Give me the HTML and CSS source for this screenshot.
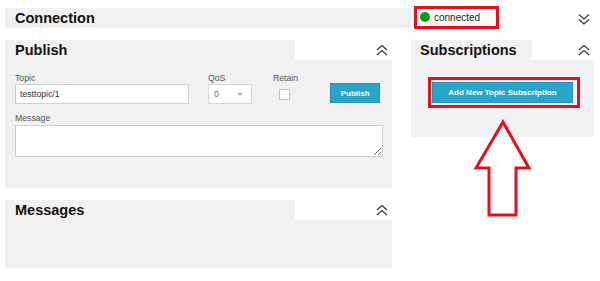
FILE: index.html
```html
<!DOCTYPE html>
<html lang="en">
<head>
    <meta charset="UTF-8">
    <title>MQTT Client</title>
    <link rel="stylesheet" href="styles.css">
</head>
<body>
    <div class="page">
        <!-- connection bar -->
        <div class="conn-row">
            <h2 class="panel-title conn-title">Connection</h2>
            <div class="status"><span class="dot"></span>connected</div>
            <svg class="toggle" width="12" height="12" viewBox="0 0 12 12">
                <polyline points="1,1.5 6,6 11,1.5"/>
                <polyline points="1,6.5 6,11 11,6.5"/>
            </svg>
        </div>

        <div class="columns">
            <div class="col-left">
                <!-- publish -->
                <section class="panel">
                    <div class="panel-head">
                        <h2 class="panel-title">Publish</h2>
                        <svg class="toggle" width="12" height="12" viewBox="0 0 12 12">
                            <polyline points="1,6 6,1.5 11,6"/>
                            <polyline points="1,11 6,6.5 11,11"/>
                        </svg>
                    </div>
                    <div class="panel-body publish-body">
                        <div class="form-row">
                            <div class="field">
                                <label class="label">Topic</label>
                                <input class="text-input" type="text" value="testtopic/1">
                            </div>
                            <div class="field qos">
                                <label class="label">QoS</label>
                                <div class="select"><span>0</span><span class="caret"></span></div>
                            </div>
                            <div class="field retain">
                                <label class="label">Retain</label>
                                <div class="check-wrap"><input class="check" type="checkbox"></div>
                            </div>
                            <button class="btn publish-btn">Publish</button>
                        </div>
                        <label class="label msg-label">Message</label>
                        <textarea class="message"></textarea>
                    </div>
                </section>

                <!-- messages -->
                <section class="panel">
                    <div class="panel-head">
                        <h2 class="panel-title">Messages</h2>
                        <svg class="toggle" width="12" height="12" viewBox="0 0 12 12">
                            <polyline points="1,6 6,1.5 11,6"/>
                            <polyline points="1,11 6,6.5 11,11"/>
                        </svg>
                    </div>
                    <div class="panel-body messages-body"></div>
                </section>
            </div>

            <div class="col-right">
                <!-- subscriptions -->
                <section class="panel">
                    <div class="panel-head">
                        <h2 class="panel-title subs-title">Subscriptions</h2>
                        <svg class="toggle" width="12" height="12" viewBox="0 0 12 12">
                            <polyline points="1,6 6,1.5 11,6"/>
                            <polyline points="1,11 6,6.5 11,11"/>
                        </svg>
                    </div>
                    <div class="panel-body subs-body">
                        <div class="callout">
                            <button class="btn add-btn">Add New Topic Subscription</button>
                        </div>
                    </div>
                </section>
                <svg class="arrow" width="58" height="98" viewBox="0 0 58 98">
                    <polygon points="29,3 55,49 42,49 42,96 15,96 15,49 2,49"/>
                </svg>
            </div>
        </div>
    </div>
</body>
</html>
```

FILE: styles.css
```css
* {
    box-sizing: border-box;
}
body {
    margin: 0;
    background: #fff;
    font-family: "Liberation Sans", Arial, sans-serif;
    color: #222;
}
.page {
    padding: 8px 6px 0 5px;
}
/* header bars */
.panel-title {
    margin: 0;
    width: 290px;
    height: 20px;
    padding-left: 10px;
    background: #f1f1f1;
    font-size: 14.5px;
    font-weight: bold;
    line-height: 20px;
    color: #111;
}
.toggle {
    margin-left: auto;
    margin-right: 4px;
    fill: none;
    stroke: #333;
    stroke-width: 1.1;
}
.conn-row {
    display: flex;
    align-items: center;
    height: 20px;
}
.conn-title {
    width: 406px;
}
.conn-row .toggle {
    margin-top: 1px;
}
.status {
    display: flex;
    align-items: center;
    gap: 4px;
    width: 85px;
    height: 23px;
    margin-left: 3px;
    margin-top: -2px;
    padding-left: 3px;
    border: 3px solid #e5101f;
    font-size: 10px;
    color: #222;
}
.dot {
    width: 10px;
    height: 10px;
    border-radius: 50%;
    background: #0e9a0e;
}
/* columns */
.columns {
    display: flex;
    align-items: flex-start;
    gap: 19px;
    margin-top: 12px;
}
.col-left {
    width: 387px;
    display: flex;
    flex-direction: column;
    gap: 12px;
}
.col-right {
    width: 183px;
    position: relative;
}
.panel-head {
    display: flex;
    align-items: center;
    height: 20px;
}
.panel-body {
    background: #f1f1f1;
}
.subs-title {
    width: 121px;
    padding-left: 9px;
}
/* publish form */
.publish-body {
    height: 128px;
    padding: 12px 0 0 10px;
}
.form-row {
    display: flex;
    align-items: flex-end;
}
.field {
    display: flex;
    flex-direction: column;
}
.label {
    display: block;
    font-size: 8.7px;
    line-height: 12px;
    color: #555;
}
.text-input {
    width: 174px;
    height: 20px;
    margin: 0;
    padding: 0 4px;
    border: 1px solid #d0d0d0;
    background: #fff;
    font-family: inherit;
    font-size: 8.7px;
    color: #333;
}
.qos {
    margin-left: 19px;
}
.select {
    display: flex;
    align-items: center;
    justify-content: space-between;
    width: 44px;
    height: 20px;
    padding: 0 8px 0 5px;
    border: 1px solid #d6d6d6;
    background: #fff;
    font-size: 8.7px;
    color: #666;
}
.caret {
    width: 0;
    height: 0;
    border-left: 3.5px solid transparent;
    border-right: 3.5px solid transparent;
    border-top: 3.5px solid #aaa;
}
.retain {
    margin-left: 21px;
}
.check-wrap {
    height: 20px;
    display: flex;
    align-items: center;
    padding-left: 6px;
}
.check {
    appearance: none;
    width: 11px;
    height: 11px;
    margin: 0;
    border: 1px solid #c4c4c4;
    background: #fff;
}
.btn {
    border: 1px solid #2195b9;
    background: #2aa5c9;
    color: #fff;
    font-family: inherit;
    font-size: 8px;
    font-weight: bold;
    padding: 0;
}
.publish-btn {
    width: 50px;
    height: 20px;
    margin-left: 32px;
    margin-bottom: 1px;
}
.msg-label {
    margin-top: 8px;
}
.message {
    display: block;
    width: 368px;
    height: 32px;
    margin: 1px 0 0;
    border: 1px solid #d0d0d0;
    background: #fff;
}
.messages-body {
    height: 48px;
}
/* subscriptions */
.subs-body {
    height: 77px;
    padding: 17px 0 0 17px;
}
.callout {
    display: inline-block;
    padding: 2px 4px 2px 1px;
    border: 3px solid #e5101f;
}
.add-btn {
    display: block;
    width: 141px;
    height: 21px;
}
.arrow {
    position: absolute;
    left: 63px;
    top: 79px;
    fill: none;
    stroke: #e5101f;
    stroke-width: 3;
}
```
